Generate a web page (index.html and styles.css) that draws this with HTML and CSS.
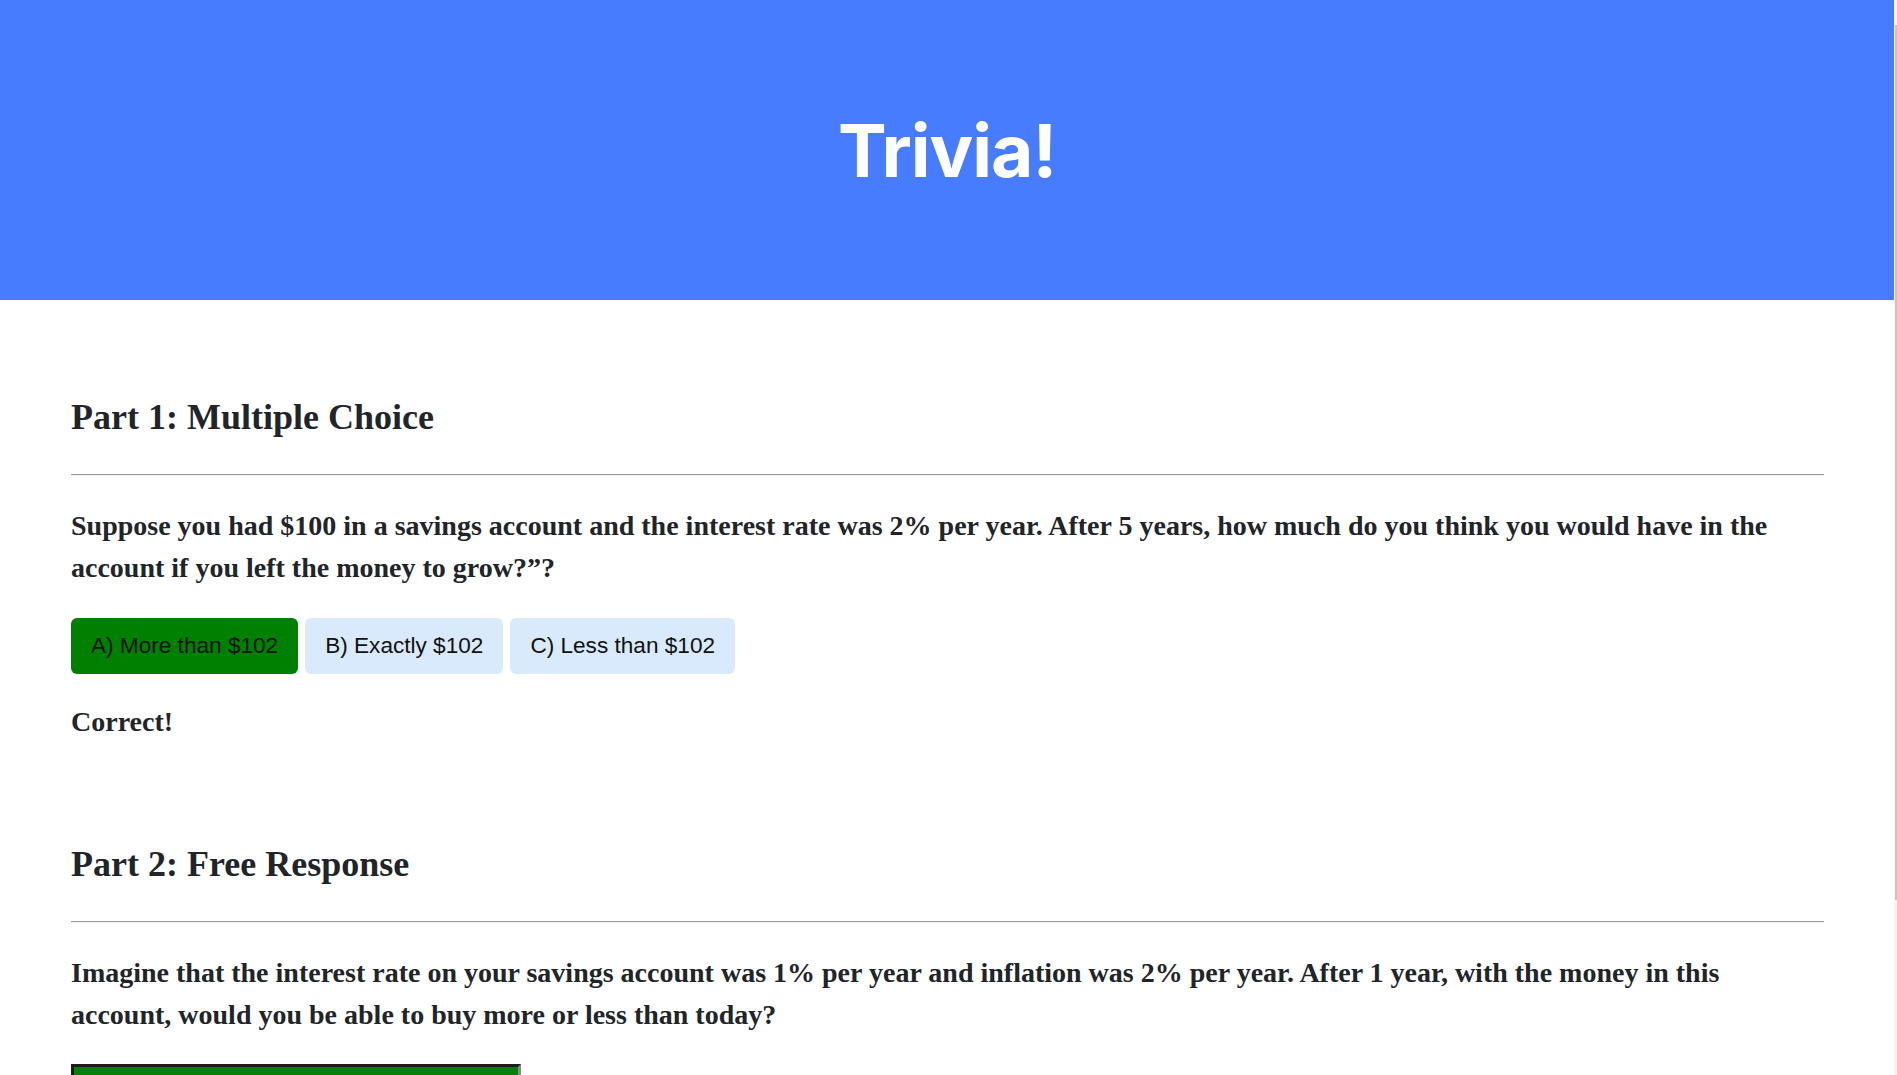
FILE: index.html
```html
<!DOCTYPE html>
<html lang="en">
<head>
<meta charset="utf-8">
<title>Trivia!</title>
<link rel="stylesheet" href="styles.css">
</head>
<body>
<div class="page">
  <header class="hero">
    <h1 class="hero-title">Trivia!</h1>
  </header>
  <main class="content">
    <section class="part part-mc">
      <h2 class="part-title">Part 1: Multiple Choice</h2>
      <hr class="divider">
      <p class="question">Suppose you had $100 in a savings account and the interest rate was 2% per year. After 5 years, how much do you think you would have in the account if you left the money to grow?”?</p>
      <div class="choices">
        <button class="choice choice-correct" type="button">A) More than $102</button>
        <button class="choice" type="button">B) Exactly $102</button>
        <button class="choice" type="button">C) Less than $102</button>
      </div>
      <p class="feedback">Correct!</p>
    </section>
    <section class="part part-fr">
      <h2 class="part-title">Part 2: Free Response</h2>
      <hr class="divider">
      <p class="question">Imagine that the interest rate on your savings account was 1% per year and inflation was 2% per year. After 1 year, with the money in this account, would you be able to buy more or less than today?</p>
      <input class="answer" type="text" aria-label="Your answer">
    </section>
  </main>
</div>
<div class="scrollbar"><div class="scrollbar-thumb"></div></div>
</body>
</html>
```
FILE: styles.css
```css
html, body {
  margin: 0;
  padding: 0;
  overflow: hidden;
  background: #ffffff;
}

body {
  font-family: "Liberation Serif", "Times New Roman", serif;
  color: #212529;
}

.page {
  margin-right: 3px;
}

.hero {
  height: 300px;
  background: #487cff;
  display: flex;
  align-items: center;
  justify-content: center;
}

.hero-title {
  margin: 0;
  font-family: "Inter", "Open Sans", sans-serif;
  font-weight: 700;
  font-size: 73px;
  letter-spacing: -1px;
  color: #ffffff;
}

.content {
  padding: 0 70px 0 71px;
}

.part-title {
  margin: 97px 0 0;
  font-size: 36px;
  line-height: 40px;
  font-weight: 700;
}

.part-fr .part-title {
  margin-top: 101px;
}

.divider {
  margin: 37px 0 0;
  border: 0;
  border-top: 1px solid #9d9d9d;
  border-bottom: 1px solid #ededed;
  height: 0;
}

.question {
  margin: 29px 0 0;
  font-size: 28px;
  line-height: 42px;
  font-weight: 700;
}

.part-fr .question {
  margin-top: 29px;
}

.choices {
  display: flex;
  gap: 7px;
  margin-top: 29px;
}

.choice {
  font-family: "Liberation Sans", Arial, sans-serif;
  font-size: 22.6px;
  line-height: 26px;
  padding: 15px 20px;
  border: 0;
  border-radius: 6px;
  background: #d9eafc;
  color: #111111;
  cursor: pointer;
}

.choice-correct {
  background: #008000;
}

.feedback {
  margin: 27px 0 0;
  font-size: 28px;
  line-height: 42px;
  font-weight: 700;
}

.answer {
  display: block;
  box-sizing: border-box;
  width: 450px;
  height: 44px;
  margin-top: 28px;
  background: #078007;
  border-style: solid;
  border-width: 3px;
  border-color: #1c1c1c #8a8a8a #d0d0d0 #1c1c1c;
  padding: 0 8px;
}

.scrollbar {
  position: fixed;
  top: 0;
  right: 0;
  width: 3px;
  height: 100%;
  background: #f4f4f4;
}

.scrollbar-thumb {
  position: absolute;
  top: 25px;
  right: 0;
  width: 2px;
  height: 875px;
  background: #c6c6c6;
}
```
